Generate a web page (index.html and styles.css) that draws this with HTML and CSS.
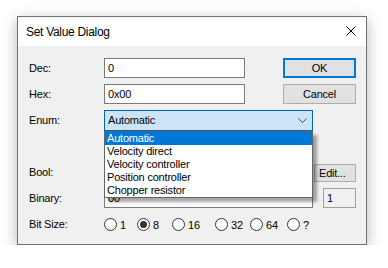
FILE: index.html
```html
<!DOCTYPE html>
<html lang="en">
<head>
  <meta charset="UTF-8">
  <title>Set Value Dialog</title>
  <link rel="stylesheet" href="styles.css">
</head>
<body>
  <div class="window">
    <div class="titlebar">
      <span class="title">Set Value Dialog</span>
      <svg class="close" width="10" height="10" viewBox="0 0 10 10">
        <path d="M0.5 0.5 L9.5 9.5 M9.5 0.5 L0.5 9.5" stroke="#000" stroke-width="1" fill="none"/>
      </svg>
    </div>
    <div class="content">
      <div class="row">
        <span class="label">Dec:</span>
        <div class="textbox short">0</div>
        <button class="btn default">OK</button>
      </div>
      <div class="row">
        <span class="label">Hex:</span>
        <div class="textbox short">0x00</div>
        <button class="btn">Cancel</button>
      </div>
      <div class="row">
        <span class="label">Enum:</span>
        <div class="combo">
          <span>Automatic</span>
          <svg class="chevron" width="9" height="5" viewBox="0 0 9 5">
            <path d="M0.5 0.5 L4.5 4.5 L8.5 0.5" stroke="#444" stroke-width="1" fill="none"/>
          </svg>
          <ul class="droplist">
            <li class="selected">Automatic</li>
            <li>Velocity direct</li>
            <li>Velocity controller</li>
            <li>Position controller</li>
            <li>Chopper resistor</li>
          </ul>
        </div>
      </div>
      <div class="row"></div>
      <div class="row">
        <span class="label">Bool:</span>
        <button class="btn edit">Edit...</button>
      </div>
      <div class="row">
        <span class="label">Binary:</span>
        <div class="textbox wide">00</div>
        <div class="textbox count">1</div>
      </div>
      <div class="row">
        <span class="label">Bit Size:</span>
        <div class="radios">
          <label class="radio"><span class="dot"></span>1</label>
          <label class="radio"><span class="dot on"></span>8</label>
          <label class="radio"><span class="dot"></span>16</label>
          <label class="radio"><span class="dot"></span>32</label>
          <label class="radio"><span class="dot"></span>64</label>
          <label class="radio"><span class="dot"></span>?</label>
        </div>
      </div>
    </div>
  </div>
</body>
</html>
```

FILE: styles.css
```css
* {
  margin: 0;
  padding: 0;
  box-sizing: border-box;
}
body {
  background: #ffffff;
  font-family: 'Liberation Sans', Arial, sans-serif;
  font-size: 11px;
  letter-spacing: -0.2px;
  color: #000;
}
.window {
  margin: 16px 0 0 17px;
  width: 350px;
  height: 229px;
  border: 1px solid #707070;
  background: #f0f0f0;
  box-shadow: 0 4px 14px rgba(0,0,0,0.28);
}
.titlebar {
  height: 29px;
  background: #fff;
  display: flex;
  align-items: center;
  justify-content: space-between;
  padding: 0 10px 0 8px;
}
.title {
  font-size: 12px;
  letter-spacing: -0.3px;
}
.close {
  margin-top: -1px;
}
.content {
  padding: 12px 10px 0 11px;
}
.row {
  display: flex;
  align-items: center;
  height: 20px;
  margin-bottom: 6px;
}
.label {
  width: 75px;
}
.textbox {
  height: 20px;
  border: 1px solid #7a7a7a;
  background: #fff;
  padding: 0 3px;
  line-height: 18px;
}
.textbox.short { width: 141px; }
.textbox.wide { width: 209px; }
.textbox.count {
  width: 33px;
  margin-left: auto;
  background: #f0f0f0;
  border-color: #a0a0a0;
}
.btn {
  margin-left: auto;
  width: 73px;
  height: 20px;
  background: #e1e1e1;
  border: 1px solid #adadad;
  font: inherit;
  letter-spacing: inherit;
  color: #000;
}
.btn.default {
  border: 2px solid #0078d7;
}
.btn.edit {
  width: 42px;
  height: 18px;
  margin-top: 1px;
  text-align: left;
  padding-left: 4px;
}
.combo {
  position: relative;
  width: 209px;
  height: 21px;
  border: 1px solid #0063b1;
  background: #cce4f7;
  display: flex;
  align-items: center;
  justify-content: space-between;
  padding: 0 5px 0 3px;
}
.droplist {
  position: absolute;
  top: 20px;
  left: -1px;
  width: 209px;
  list-style: none;
  background: #fff;
  border: 1px solid #646464;
  box-shadow: 4px 4px 3px rgba(0,0,0,0.35);
  z-index: 2;
}
.droplist li {
  height: 13px;
  line-height: 13px;
  padding-left: 2px;
}
.droplist li.selected {
  background: #0078d7;
  color: #fff;
}
.radios {
  display: grid;
  grid-template-columns: 33px 35px 43px 35px 37px auto;
  margin-top: 1px;
}
.radio {
  display: flex;
  align-items: center;
}
.dot {
  width: 13px;
  height: 13px;
  border: 1px solid #333;
  border-radius: 50%;
  background: #fff;
  margin-right: 3px;
  display: flex;
  align-items: center;
  justify-content: center;
}
.dot.on::after {
  content: '';
  width: 7px;
  height: 7px;
  border-radius: 50%;
  background: #333;
}
```
